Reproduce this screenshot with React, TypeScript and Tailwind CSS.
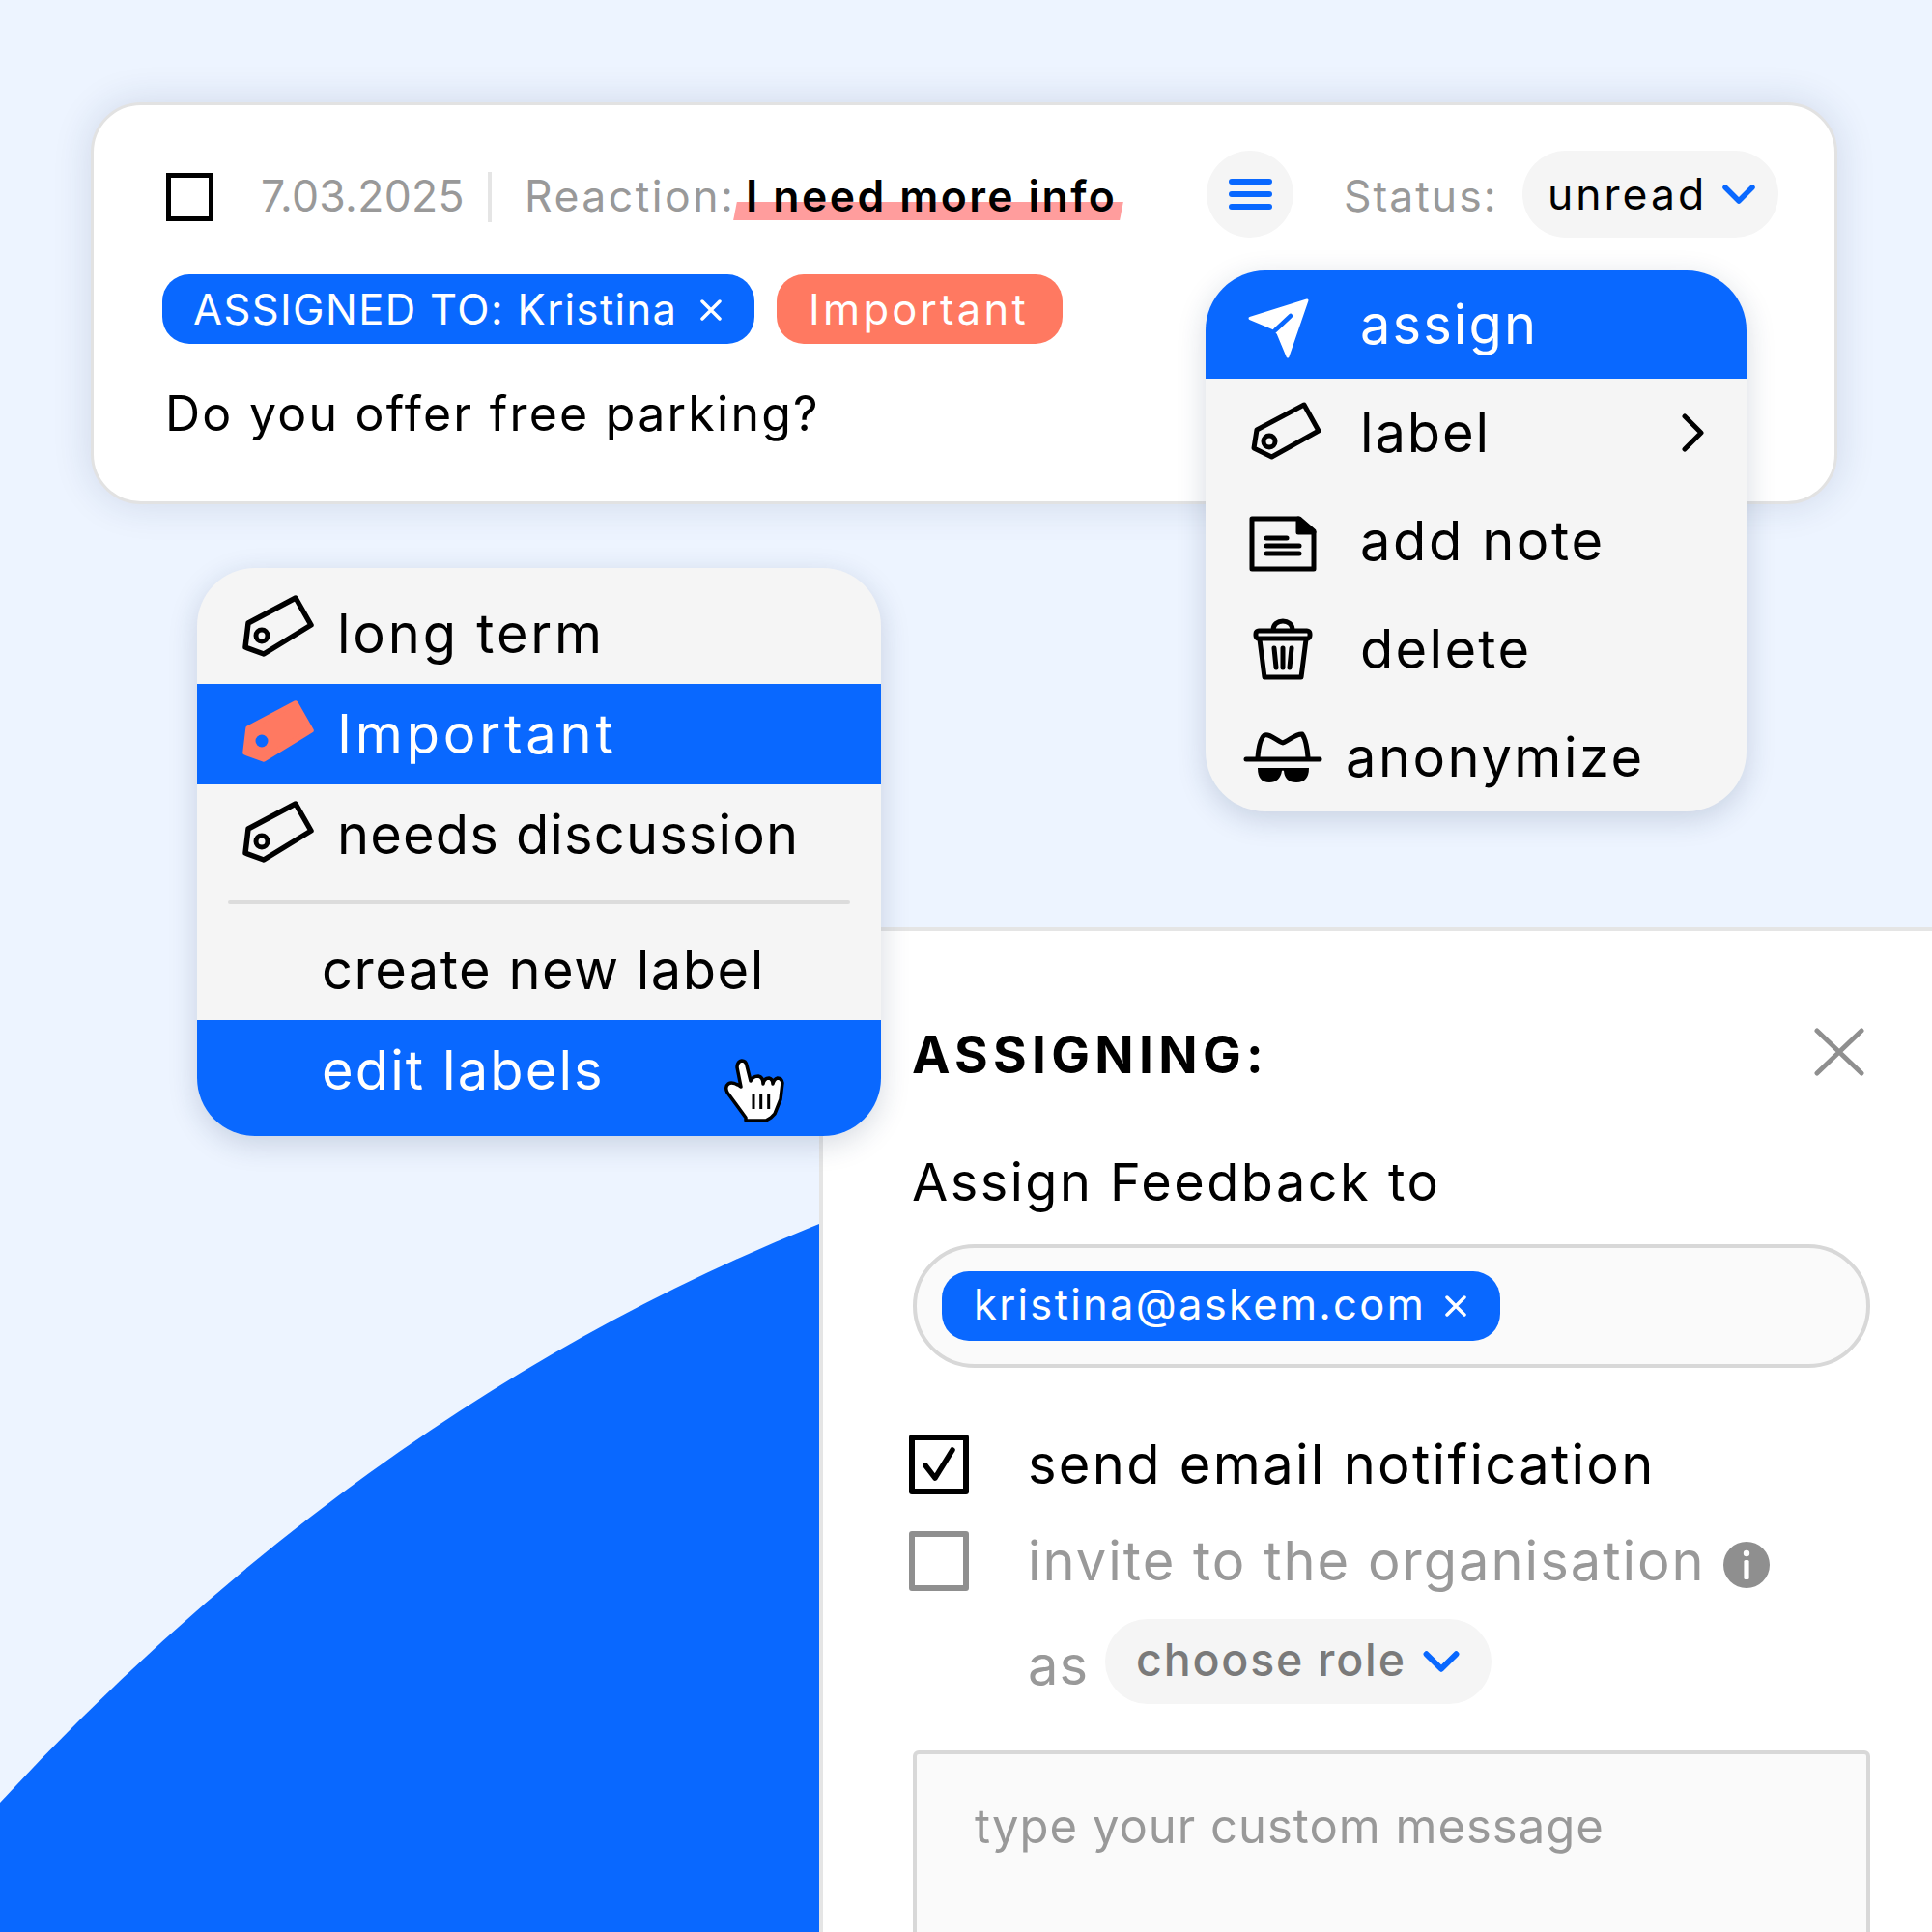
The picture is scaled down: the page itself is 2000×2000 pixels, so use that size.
import React from "react";

function Chevron({ className }: { className: string }) {
  return (
    <svg className={className} viewBox="0 0 34 20" fill="none" stroke="#0968ff" strokeWidth="5.5" strokeLinecap="round" strokeLinejoin="round">
      <path d="M3 3 L17 17 L31 3" />
    </svg>
  );
}

function SmallX({ className }: { className: string }) {
  return (
    <svg className={className} viewBox="0 0 24 22" fill="none" stroke="#fff" strokeWidth="3.5" strokeLinecap="round">
      <path d="M3 2 L21 20 M21 2 L3 20" />
    </svg>
  );
}

function Tag({ filled }: { filled?: boolean }) {
  return (
    <svg className="h-[66px] w-[80px] shrink-0" viewBox="0 0 80 66" fill="none">
      <path
        d="M58 4 L74 32 L25 62 L6 55 L9 30 Z"
        fill={filled ? "#ff7961" : "none"}
        stroke={filled ? "#ff7961" : "#000"}
        strokeWidth="5.5"
        strokeLinejoin="round"
      />
      <circle cx="23" cy="43" r={filled ? 6.5 : 6} fill={filled ? "#0968ff" : "none"} stroke={filled ? "none" : "#000"} strokeWidth="5" />
    </svg>
  );
}

function SendIcon() {
  return (
    <svg className="h-[112px] w-[130px] shrink-0" viewBox="0 0 130 112" fill="none">
      <path d="M83 31 L24 49.5 L49 60 L53 65 L63 89 Z" fill="#fff" stroke="#fff" strokeWidth="3" strokeLinejoin="round" />
      <path d="M50 62 L66 47" stroke="#0968ff" strokeWidth="4.5" strokeLinecap="round" />
    </svg>
  );
}

function MenuTagIcon() {
  return (
    <svg className="h-[112px] w-[130px] shrink-0" viewBox="0 0 130 112" fill="none" stroke="#000" strokeWidth="5" strokeLinejoin="round">
      <path d="M80 27 L95 54 L46.5 81 L28 72 L31 53 Z" />
      <circle cx="44" cy="65" r="6" strokeWidth="5" />
    </svg>
  );
}

function NoteIcon() {
  return (
    <svg className="h-[112px] w-[130px] shrink-0" viewBox="0 0 130 112" fill="none" stroke="#000" strokeWidth="5" strokeLinejoin="round" strokeLinecap="round">
      <path d="M26 33 H75 L90 46 V85 H26 Z" />
      <path d="M74 33 L90 47 H74 Z" fill="#000" />
      <path d="M41 53 H62 M41 61 H75 M41 69 H75" />
    </svg>
  );
}

function TrashIcon() {
  return (
    <svg className="h-[112px] w-[130px] shrink-0" viewBox="0 0 130 112" fill="none" stroke="#000" strokeWidth="5" strokeLinejoin="round" strokeLinecap="round">
      <path d="M48 36 C48 24 68 24 68 36" />
      <rect x="30" y="37" width="56" height="8" rx="3" />
      <path d="M34 46 L39 85 H77 L82 46" />
      <path d="M49 55 L51 75 M58 55 V75 M67 55 L65 75" />
    </svg>
  );
}

function HatIcon() {
  return (
    <svg className="h-[112px] w-[130px] shrink-0" viewBox="0 0 130 112" fill="none">
      <path d="M32 56 C33 44 35 36 39 33 C44 31 52 39 58 41 C64 39 72 31 78 32 C81 36 83 44 84 56" stroke="#000" strokeWidth="5" strokeLinecap="round" strokeLinejoin="round" />
      <path d="M20 58 H96" stroke="#000" strokeWidth="5" strokeLinecap="round" />
      <path d="M32 67 H85 Q85 82 72 82 Q60 82 59 70 Q58 69 57 70 Q55 82 44 82 Q32 82 32 67 Z" fill="#000" />
    </svg>
  );
}

function HandCursor() {
  return (
    <svg className="absolute left-[-19px] top-[13px] h-[100px] w-[100px]" viewBox="0 0 100 100" fill="#fff" stroke="#000" strokeWidth="3.5" strokeLinejoin="round" strokeLinecap="round">
      <path d="M38 17 Q33 18 33 24 L37 44 Q28 38 24 41 Q20 44 23 50 L42 76 V79 H63 L68 76 L72 72 L78 57 L80 40 Q79 35 75 35 Q71 36 70 41 Q70 36 66 35 Q61 35 60 41 Q60 34 55 33 Q49 33 47 38 L43 22 Q42 17 38 17 Z" />
      <path d="M50 51 V67 M57.7 51 V67 M65.7 51 V67" strokeWidth="3" fill="none" strokeLinecap="butt" />
    </svg>
  );
}

function MenuRow({ icon, label, active, labelClass, children }: { icon: React.ReactNode; label: string; active?: boolean; labelClass: string; children?: React.ReactNode }) {
  return (
    <div className={`flex h-[112px] items-center pl-[22px] text-[56px] ${active ? "bg-[#0968ff] text-white" : "text-black"}`}>
      {icon}
      <span className={labelClass}>{label}</span>
      {children}
    </div>
  );
}

export default function App() {
  return (
    <div className="relative h-[2000px] w-[2000px] overflow-hidden bg-[#edf4ff] font-['Inter',sans-serif] text-black">
      {/* blue shape behind the panel */}
      <svg className="absolute left-0 top-0 h-[2000px] w-[2000px]" viewBox="0 0 2000 2000">
        <path d="M0 1866 Q380 1455 848 1267 V2000 H0 Z" fill="#0968ff" />
      </svg>

      {/* feedback card */}
      <div className="relative ml-[94px] mt-[106px] h-[416px] w-[1808px] rounded-[52px] border-[3px] border-[#e2e2e2] bg-white pl-[75px] pt-[47px] shadow-[0_0_40px_rgba(30,50,90,0.14)]">
        <div className="flex h-[90px] items-center">
          <div className="mt-[6px] h-[50px] w-[49px] shrink-0 border-[5px] border-black" />
          <span className="ml-[49px] w-[235px] shrink-0 pt-[5px] text-[44.5px] tracking-[0.3px] text-[#999]">7.03.2025</span>
          <div className="mt-[6px] h-[52px] w-[4px] shrink-0 bg-[#e5e5e5]" />
          <span className="ml-[34px] w-[229px] shrink-0 whitespace-nowrap pt-[5px] text-[44.5px] tracking-[2.5px] text-[#999]">Reaction:</span>
          <span className="relative w-[477px] shrink-0 pt-[5px] text-[44.5px] font-semibold tracking-[2.4px]">
            <span className="absolute left-[-11px] top-[44px] h-[19px] w-[400px] -skew-x-[11deg] bg-[#ff9d9d]" />
            <span className="relative whitespace-nowrap">I need more info</span>
          </span>
          <div className="flex h-[90px] w-[90px] shrink-0 flex-col items-center justify-center gap-[7px] rounded-full bg-[#f5f5f5]">
            <div className="h-[6px] w-[45px] rounded-full bg-[#0968ff]" />
            <div className="h-[6px] w-[45px] rounded-full bg-[#0968ff]" />
            <div className="h-[6px] w-[45px] rounded-full bg-[#0968ff]" />
          </div>
          <span className="ml-[52px] w-[185px] shrink-0 pt-[5px] text-[44.5px] tracking-[2px] text-[#999]">Status:</span>
          <div className="flex h-[90px] w-[265px] shrink-0 items-center rounded-full bg-[#f5f5f5] pl-[26px] text-[44.5px] tracking-[3px]">
            <span className="w-[181px] shrink-0">unread</span>
            <Chevron className="h-[20px] w-[34px]" />
          </div>
        </div>

        <div className="ml-[-4px] mt-[38px] flex gap-[23px]">
          <div className="flex h-[72px] w-[613px] items-center rounded-[28px] bg-[#0968ff] pl-[32px] pt-[2px] text-[43.5px] tracking-[1.4px] text-white">
            <span className="w-[524px] shrink-0 whitespace-nowrap">ASSIGNED TO: Kristina</span>
            <SmallX className="h-[22px] w-[24px]" />
          </div>
          <div className="flex h-[72px] w-[296px] items-center rounded-[28px] bg-[#ff7961] pl-[33px] pt-[2px] text-[43.5px] tracking-[3.3px] text-white">Important</div>
        </div>

        <div className="ml-[-1px] mt-[42px] h-[60px] text-[50px] leading-[60px] tracking-[2.25px]">Do you offer free parking?</div>
      </div>

      {/* assign panel */}
      <div className="ml-[848px] mt-[438px] h-[1100px] border-l-[4px] border-t-[4px] border-[#e5e5e5] bg-white pl-[92px] pr-[64px] pt-[99px]">
        <div className="flex h-[60px] items-center justify-between">
          <span className="text-[53px] font-bold tracking-[5.3px]">ASSIGNING:</span>
          <svg className="mb-[9px] mr-[6px] h-[50px] w-[52px]" viewBox="0 0 52 50" fill="none" stroke="#8f8f8f" strokeWidth="5" strokeLinecap="round">
            <path d="M3 3 L49 47 M49 3 L3 47" />
          </svg>
        </div>
        <div className="mt-[71px] h-[60px] text-[54px] leading-[60px] tracking-[2.5px]">Assign Feedback to</div>

        <div className="ml-[1px] mt-[34px] flex h-[128px] items-center rounded-full border-[4px] border-[#d8d8d8] bg-[#fafafa] pl-[26px]">
          <div className="flex h-[72px] w-[578px] items-center rounded-[28px] bg-[#0968ff] pl-[33px] text-[43.5px] tracking-[2.3px] text-white">
            <span className="w-[487px] shrink-0 pb-[3px]">kristina@askem.com</span>
            <SmallX className="h-[22px] w-[24px]" />
          </div>
        </div>

        <div className="ml-[-3px] mt-[69px] flex h-[62px] items-center text-[56px]">
          <div className="flex h-[62px] w-[62px] shrink-0 items-center justify-center rounded-[3px] border-[6px] border-black">
            <svg className="h-[36px] w-[36px]" viewBox="0 0 36 36" fill="none" stroke="#000" strokeWidth="5.5" strokeLinecap="round" strokeLinejoin="round">
              <path d="M4 19 L14 32 L32 3" />
            </svg>
          </div>
          <span className="ml-[61px] tracking-[2.3px]">send email notification</span>
        </div>

        <div className="ml-[-3px] mt-[38px] flex h-[62px] items-center text-[56px] text-[#999]">
          <div className="h-[62px] w-[62px] shrink-0 rounded-[3px] border-[6px] border-[#8f8f8f]" />
          <span className="ml-[61px] w-[720px] shrink-0 whitespace-nowrap tracking-[2px]">invite to the organisation</span>
          <div className="mt-[8px] flex h-[48px] w-[48px] shrink-0 items-center justify-center rounded-full bg-[#8f8f8f]">
            <svg className="h-[32px] w-[10px]" viewBox="0 0 10 32" fill="#fff">
              <circle cx="5" cy="4" r="3.2" />
              <rect x="2.4" y="11" width="5.2" height="20" rx="1.5" />
            </svg>
          </div>
        </div>

        <div className="ml-[120px] mt-[29px] flex h-[88px] items-center text-[56px] text-[#999]">
          <span className="w-[80px] shrink-0 pt-[7px] tracking-[1px]">as</span>
          <div className="flex h-[88px] w-[400px] shrink-0 items-center rounded-full bg-[#f5f5f5] pl-[32px] text-[46.5px] font-medium tracking-[1.8px] text-[#7a7a7a]">
            <span className="w-[296px] shrink-0 whitespace-nowrap pb-[3px]">choose role</span>
            <Chevron className="h-[22px] w-[40px]" />
          </div>
        </div>

        <div className="ml-[1px] mt-[48px] h-[400px] rounded-[6px] border-[4px] border-[#d8d8d8] bg-[#fafafa] pl-[60px] pt-[45px] text-[49px] leading-[60px] tracking-[1px] text-[#999]">
          type your custom message
        </div>
      </div>

      {/* actions menu */}
      <div className="absolute left-[1248px] top-[280px] w-[560px] overflow-hidden rounded-[62px] bg-[#f5f5f5] shadow-[0_8px_30px_rgba(30,50,90,0.18)]">
        <MenuRow icon={<SendIcon />} label="assign" active labelClass="ml-[8px] tracking-[2.1px]" />
        <MenuRow icon={<MenuTagIcon />} label="label" labelClass="ml-[8px] tracking-[1.9px]">
          <svg className="ml-auto mr-[44px] h-[40px] w-[24px]" viewBox="0 0 24 40" fill="none" stroke="#000" strokeWidth="5" strokeLinecap="round" strokeLinejoin="round">
            <path d="M4 3 L21 20 L4 37" />
          </svg>
        </MenuRow>
        <MenuRow icon={<NoteIcon />} label="add note" labelClass="ml-[8px] tracking-[2.6px]" />
        <MenuRow icon={<TrashIcon />} label="delete" labelClass="ml-[8px] tracking-[2.3px]" />
        <MenuRow icon={<HatIcon />} label="anonymize" labelClass="ml-[-7px] tracking-[2.5px]" />
      </div>

      {/* label menu */}
      <div className="absolute left-[204px] top-[588px] w-[708px] overflow-hidden rounded-[60px] bg-[#f5f5f5] text-[56px] shadow-[0_8px_30px_rgba(30,50,90,0.18)]">
        <div className="flex h-[120px] items-center gap-[21px] pl-[44px]">
          <Tag />
          <span className="pt-[16px] tracking-[2.8px]">long term</span>
        </div>
        <div className="flex h-[104px] items-center gap-[21px] bg-[#0968ff] pl-[44px] text-white">
          <div className="mb-[7px]"><Tag filled /></div>
          <span className="tracking-[3.8px]">Important</span>
        </div>
        <div className="flex h-[104px] items-center gap-[21px] pl-[44px]">
          <div className="mb-[6px]"><Tag /></div>
          <span className="tracking-[1.15px]">needs discussion</span>
        </div>
        <div className="mx-[32px] mt-[16px] h-[4px] rounded-full bg-[#dcdcdc]" />
        <div className="flex h-[120px] items-center pl-[129px] pt-[16px] tracking-[1.5px]">create new label</div>
        <div className="flex h-[120px] items-center bg-[#0968ff] pb-[16px] pl-[129px] tracking-[2.1px] text-white">
          <span className="relative w-[416px] shrink-0">edit labels</span>
          <div className="relative h-[80px] w-[60px] shrink-0">
            <HandCursor />
          </div>
        </div>
      </div>
    </div>
  );
}
